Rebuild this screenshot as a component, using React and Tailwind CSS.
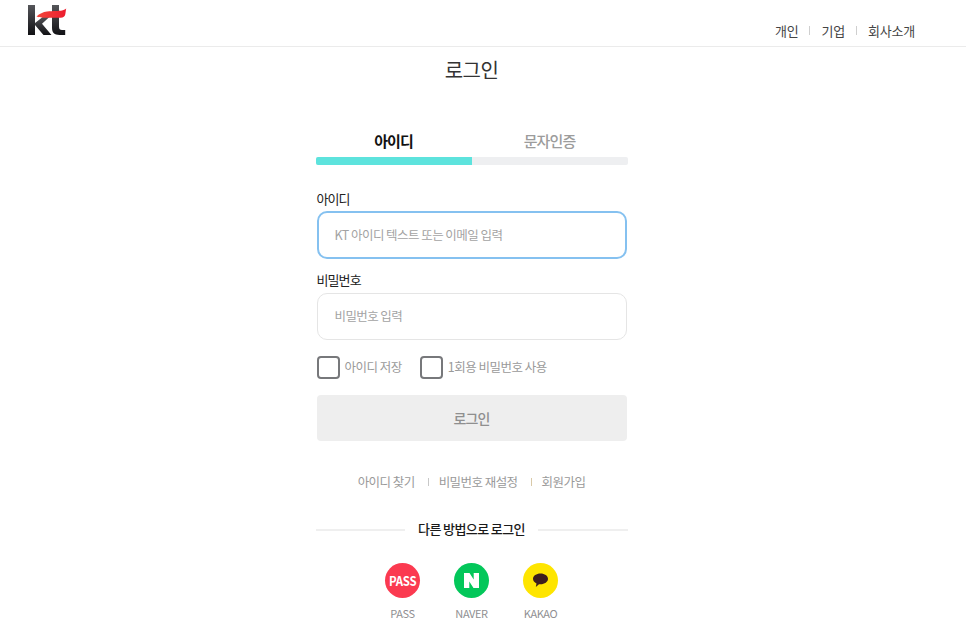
import React from "react";

const font = { fontFamily: '"Noto Sans CJK KR", "Noto Sans", sans-serif' };

const KtLogo = () => (
  <svg width="40" height="34" viewBox="0 0 40 34" className="block">
    <defs>
      <linearGradient id="ktDark" x1="0" y1="0" x2="0" y2="1">
        <stop offset="0" stopColor="#55565a" />
        <stop offset="1" stopColor="#111114" />
      </linearGradient>
      <linearGradient id="ktRed" x1="0" y1="0" x2="1" y2="0">
        <stop offset="0" stopColor="#f4483c" />
        <stop offset="1" stopColor="#ec1c2e" />
      </linearGradient>
    </defs>
    <path d="M0 1h7v30H0z" fill="url(#ktDark)" />
    <path d="M7 19 16 12h6.500L14 19.800 23.500 31H15.500L7 21z" fill="url(#ktDark)" />
    <path d="M24 1h7v21.500c0 2.600 1 3.500 3 3.500h3.200V31h-5.600c-5.200 0-7.600-2.400-7.600-7.200z" fill="url(#ktDark)" />
    <path d="M8.500 12.500c3-2.800 6.500-4.500 10.500-5 6-.6 12-.4 15-1 2.200-.4 3.700-1.200 4.200-2.200l-.9 6c-.4 2.300-2 3.400-4.600 3.400H15.500C13 13.700 10.500 13.300 8.500 12.500z" fill="url(#ktRed)" />
  </svg>
);

const Label = ({ children }) => (
  <label className="block text-[13px] leading-[19px] tracking-[-0.9px] text-[#222]">{children}</label>
);

const Check = ({ label }) => (
  <label className="flex items-center gap-[5px]">
    <span className="w-[23px] h-[23px] rounded-[4px] border-2 border-[#77787b] bg-white" />
    <span className="text-[12.5px] tracking-[-0.5px] text-[#9a9a9a]">{label}</span>
  </label>
);

const Social = ({ name, color, children }) => (
  <div className="flex flex-col items-center w-[35px]">
    <div className={`w-[35px] h-[35px] rounded-full flex items-center justify-center ${color}`}>{children}</div>
    <span className="mt-[7px] text-[11px] leading-[16px] tracking-[-0.4px] text-[#8f8f92] whitespace-nowrap">{name}</span>
  </div>
);

export default function App() {
  return (
    <div style={font} className="h-[639px] bg-white overflow-hidden">
      <header className="h-[47px] border-b border-[#ebebeb] flex justify-between pl-[28px] pr-[51px]">
        <div className="pt-[4px]">
          <KtLogo />
        </div>
        <nav className="flex items-center self-start pt-[21px] text-[13px] leading-[19px] tracking-[-0.2px] text-[#444]">
          <a>개인</a>
          <span className="w-px h-[9px] bg-[#cfcfcf] mx-[11px]" />
          <a>기업</a>
          <span className="w-px h-[9px] bg-[#cfcfcf] mx-[11px]" />
          <a>회사소개</a>
        </nav>
      </header>

      <main className="w-[943px] flex flex-col items-center">
        <h1 className="mt-[8px] text-[20px] leading-[30px] tracking-[-0.6px] font-normal text-[#333]">로그인</h1>

        <div className="w-[312px] mt-[39px]">
          <div className="flex h-[33px] items-center text-[15px] leading-[22px] tracking-[-0.9px]">
            <div className="flex-1 text-center font-bold text-[#111] pt-[1px]">아이디</div>
            <div className="flex-1 text-center font-medium text-[#9c9c9c] pt-[1px]">문자인증</div>
          </div>
          <div className="h-[8px] rounded-[2px] bg-[#eeeff1] overflow-hidden">
            <div className="w-1/2 h-full bg-[#5de3dd]" />
          </div>

          <div className="mt-[24px] px-[1px]">
            <Label>아이디</Label>
            <div className="mt-[3px] h-[48px] rounded-[10px] border-2 border-[#85c1f0] flex items-center pl-[16px] text-[12.5px] tracking-[-0.55px] text-[#a3a3a3]">
              KT 아이디 텍스트 또는 이메일 입력
            </div>

            <div className="mt-[11px]">
              <Label>비밀번호</Label>
            </div>
            <div className="mt-[4px] h-[47px] rounded-[10px] border border-[#e5e5e5] flex items-center pl-[17px] text-[12.5px] tracking-[-0.6px] text-[#a3a3a3]">
              비밀번호 입력
            </div>

            <div className="mt-[16px] flex gap-[18px]">
              <Check label="아이디 저장" />
              <Check label="1회용 비밀번호 사용" />
            </div>

            <button className="mt-[16px] w-full h-[46px] rounded-[4px] bg-[#eeeeee] text-[14px] tracking-[-0.9px] font-medium text-[#8f8f8f]">
              로그인
            </button>
          </div>

          <div className="mt-[31px] flex justify-center items-center text-[12.5px] leading-[19px] tracking-[-0.55px] text-[#9a9a9a]">
            <a>아이디 찾기</a>
            <span className="w-px h-[8px] bg-[#c8c8c8] ml-[13px] mr-[10px]" />
            <a>비밀번호 재설정</a>
            <span className="w-px h-[8px] bg-[#d9c9a8] ml-[13px] mr-[10px]" />
            <a>회원가입</a>
          </div>

          <div className="mt-[28px] flex items-center">
            <span className="flex-1 h-[2px] bg-[#efefef]" />
            <span className="px-[13px] pb-[2px] text-[13px] leading-[19px] tracking-[-0.6px] font-medium text-[#1a1a1a]">다른 방법으로 로그인</span>
            <span className="flex-1 h-[2px] bg-[#efefef]" />
          </div>

          <div className="mt-[23px] flex justify-center gap-[34px]">
            <Social name="PASS" color="bg-[#fb3a50]">
              <span className="text-[13px] font-bold text-white tracking-[-0.2px] scale-x-[0.88]">PASS</span>
            </Social>
            <Social name="NAVER" color="bg-[#03c75a]">
              <svg width="15" height="15" viewBox="0 0 15 15">
                <path d="M0 0h5.500l4.200 6.500V0H15v15H9.500L5.300 8.500V15H0z" fill="#fff" />
              </svg>
            </Social>
            <Social name="KAKAO" color="bg-[#fee500]">
              <svg width="15" height="15" viewBox="0 0 16 15">
                <path d="M8 0C3.600 0 0 2.400 0 5.700c0 2.200 1.500 4 3.700 5l-.7 3.800 3.400-3c.5.100 1.100.1 1.600.1 4.400 0 8-2.600 8-5.900S12.400 0 8 0z" fill="#3c1e1e" />
              </svg>
            </Social>
          </div>
        </div>
      </main>
    </div>
  );
}
